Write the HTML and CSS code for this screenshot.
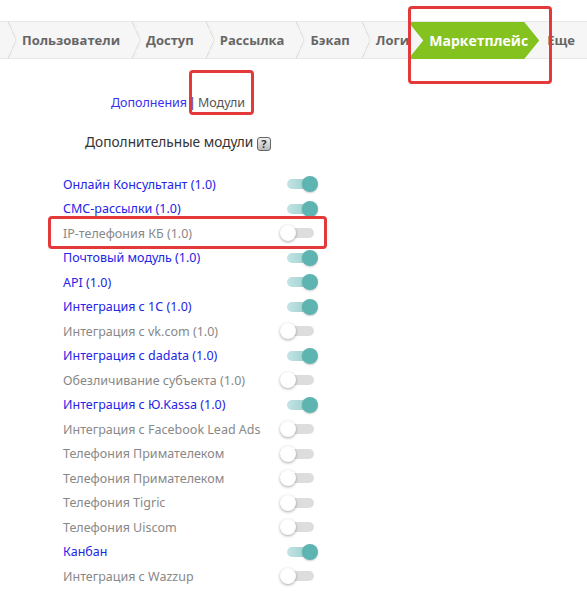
FILE: index.html
```html
<!DOCTYPE html>
<html lang="ru">
<head>
  <meta charset="UTF-8">
  <title>Маркетплейс</title>
  <link rel="stylesheet" href="styles.css">
</head>
<body>
  <div class="crumbs">
    <span class="chev"></span>
    <a class="crumb">Пользователи</a><span class="chev"></span>
    <a class="crumb">Доступ</a><span class="chev"></span>
    <a class="crumb">Рассылка</a><span class="chev"></span>
    <a class="crumb">Бэкап</a><span class="chev"></span>
    <a class="crumb crumb-cut">Логи</a>
    <a class="crumb crumb-active">Маркетплейс</a>
    <a class="crumb crumb-more">Еще</a>
  </div>

  <div class="modules">
    <div class="switcher">
      <a class="link">Дополнения</a><span class="bar">|</span><span class="current">Модули<span class="mark mark-current"></span></span>
    </div>

    <div class="title">Дополнительные модули <span class="help">?</span></div>

    <ul class="list">
      <li class="row on"><span>Онлайн Консультант (1.0)</span><span class="toggle"></span></li>
      <li class="row on"><span>СМС-рассылки (1.0)</span><span class="toggle"></span></li>
      <li class="row"><span>IP-телефония КБ (1.0)</span><span class="toggle"></span><span class="mark mark-row"></span></li>
      <li class="row on"><span>Почтовый модуль (1.0)</span><span class="toggle"></span></li>
      <li class="row on"><span>API (1.0)</span><span class="toggle"></span></li>
      <li class="row on"><span>Интеграция с 1С (1.0)</span><span class="toggle"></span></li>
      <li class="row"><span>Интеграция с vk.com (1.0)</span><span class="toggle"></span></li>
      <li class="row on"><span>Интеграция с dadata (1.0)</span><span class="toggle"></span></li>
      <li class="row"><span>Обезличивание субъекта (1.0)</span><span class="toggle"></span></li>
      <li class="row on"><span>Интеграция с Ю.Kassa (1.0)</span><span class="toggle"></span></li>
      <li class="row"><span>Интеграция с Facebook Lead Ads</span><span class="toggle"></span></li>
      <li class="row"><span>Телефония Примателеком</span><span class="toggle"></span></li>
      <li class="row"><span>Телефония Примателеком</span><span class="toggle"></span></li>
      <li class="row"><span>Телефония Tigric</span><span class="toggle"></span></li>
      <li class="row"><span>Телефония Uiscom</span><span class="toggle"></span></li>
      <li class="row on"><span>Канбан</span><span class="toggle"></span></li>
      <li class="row"><span>Интеграция с Wazzup</span><span class="toggle"></span></li>
    </ul>
  </div>
</body>
</html>
```

FILE: styles.css
```css
body {
  margin: 0;
  font-family: "Noto Sans", Arial, sans-serif;
  background: #fff;
  overflow: hidden;
}
.crumbs {
  position: relative;
  display: flex;
  align-items: center;
  margin-top: 21px;
  height: 36px;
  background: #f6f6f6;
  border-top: 1px solid #e8e8e8;
  border-bottom: 1px solid #e8e8e8;
  white-space: nowrap;
  font-family: "Open Sans", Arial, sans-serif;
  font-weight: 700;
  font-size: 13px;
  color: #666;
}
/* red highlight around the active crumb */
.crumbs::after {
  content: "";
  position: absolute;
  left: 408px;
  top: -16px;
  width: 138px;
  height: 72px;
  border: 3px solid #e3393b;
  border-radius: 4px;
}
.crumb {
  padding: 0 12px 0 6px;
}
.chev {
  flex: none;
  width: 8px;
  height: 36px;
  background: linear-gradient(to top right, transparent 48%, #dcdcdc 49%, #dcdcdc 53%, transparent 54%) 0 0 / 8px 18px no-repeat,
              linear-gradient(to bottom right, transparent 48%, #dcdcdc 49%, #dcdcdc 53%, transparent 54%) 0 18px / 8px 18px no-repeat;
  filter: drop-shadow(1px 0 1px rgba(0, 0, 0, 0.06));
}
.chev:first-child {
  margin-left: 8px;
}
.crumb-cut {
  padding-right: 0;
  width: 36px;
  overflow: hidden;
}
.crumb-active {
  flex: none;
  width: 131px;
  height: 37px;
  margin-top: 1px;
  padding: 0 0 0 21px;
  box-sizing: border-box;
  line-height: 37px;
  font-size: 14px;
  color: #fff;
  background: #84c21f;
  clip-path: polygon(0 0, 116px 0, 131px 50%, 116px 100%, 0 100%, 15px 50%);
}
.crumb-more {
  padding-left: 8px;
}
.mark {
  position: absolute;
  border: 3px solid #e3393b;
  border-radius: 4px;
}
.modules {
  width: 340px;
  margin-left: 8px;
  font-size: 12.5px;
}
.switcher {
  margin-top: 34px;
  line-height: 20px;
  text-align: center;
  color: #555;
}
.link {
  color: #3a2ff0;
}
.bar {
  color: #3a3a8a;
  margin: 0 2px 0 2px;
}
.current {
  position: relative;
}
.mark-current {
  left: -9px;
  top: -24px;
  width: 59px;
  height: 39px;
}
.title {
  margin-top: 19px;
  line-height: 20px;
  text-align: center;
  color: #333;
  font-size: 13.7px;
}
.help {
  display: inline-block;
  width: 12px;
  height: 12px;
  border: 1px solid #666;
  border-radius: 3px;
  background: linear-gradient(#eee, #bbb);
  font-size: 11px;
  font-weight: 700;
  line-height: 12px;
  color: #333;
  text-align: center;
  vertical-align: -1px;
}
.list {
  list-style: none;
  margin: 20px 0 0 0;
  padding: 0 0 0 55px;
}
.row {
  position: relative;
  display: flex;
  justify-content: space-between;
  align-items: center;
  width: 255px;
  height: 24.5px;
  color: #888;
}
.row.on {
  color: #2424e6;
}
.toggle {
  position: relative;
  flex: none;
  width: 38px;
  height: 16px;
}
.toggle::before {
  content: "";
  position: absolute;
  left: 7px;
  top: 3px;
  width: 27px;
  height: 10px;
  border-radius: 5px;
  background: #ddd;
}
.toggle::after {
  content: "";
  position: absolute;
  left: 0;
  top: 0;
  width: 16px;
  height: 16px;
  border-radius: 50%;
  background: #fff;
  box-shadow: 0 1px 3px rgba(0, 0, 0, 0.35);
}
.on .toggle::before {
  background: linear-gradient(to right, #c4e4e3, #8dcbc8);
}
.on .toggle::after {
  left: 22px;
  background: #5db4b1;
  box-shadow: 0 1px 2px rgba(0, 0, 0, 0.2);
}
.mark-row {
  left: -15px;
  top: -5px;
  width: 273px;
  height: 27px;
}
```
